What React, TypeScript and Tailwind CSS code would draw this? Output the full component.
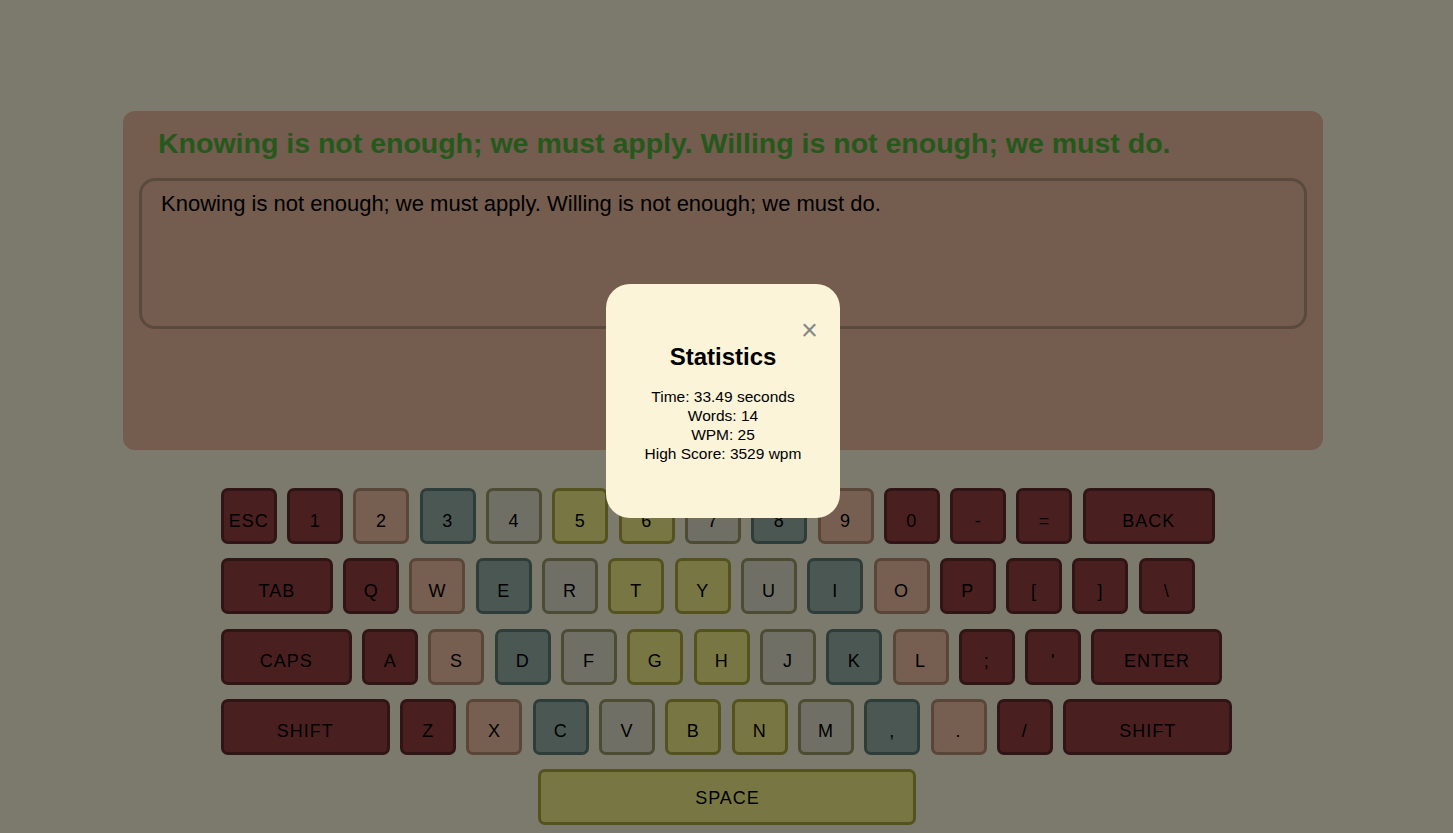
import React from "react";

type Tone = "red" | "brown" | "slate" | "gray" | "olive";

const toneClass: Record<Tone, string> = {
  red: "bg-[#943e40] border-[#5e2a2c]",
  brown: "bg-[#ecbca0] border-[#b48c70]",
  slate: "bg-[#96aea6] border-[#5e7a74]",
  gray: "bg-[#dedecc] border-[#969866]",
  olive: "bg-[#f0ee86] border-[#a8a43e]",
};

type KeyDef = { label: string; tone: Tone; w?: string; pad?: string };

const rows: KeyDef[][] = [
  [
    { label: "ESC", tone: "red" },
    { label: "1", tone: "red" },
    { label: "2", tone: "brown" },
    { label: "3", tone: "slate" },
    { label: "4", tone: "gray" },
    { label: "5", tone: "olive" },
    { label: "6", tone: "olive" },
    { label: "7", tone: "gray" },
    { label: "8", tone: "slate" },
    { label: "9", tone: "brown" },
    { label: "0", tone: "red" },
    { label: "-", tone: "red" },
    { label: "=", tone: "red" },
    { label: "BACK", tone: "red", w: "w-[132px]" },
  ],
  [
    { label: "TAB", tone: "red", w: "w-[112px]" },
    { label: "Q", tone: "red" },
    { label: "W", tone: "brown" },
    { label: "E", tone: "slate" },
    { label: "R", tone: "gray" },
    { label: "T", tone: "olive" },
    { label: "Y", tone: "olive" },
    { label: "U", tone: "gray" },
    { label: "I", tone: "slate" },
    { label: "O", tone: "brown" },
    { label: "P", tone: "red" },
    { label: "[", tone: "red" },
    { label: "]", tone: "red" },
    { label: "\\", tone: "red" },
  ],
  [
    { label: "CAPS", tone: "red", w: "w-[131px]" },
    { label: "A", tone: "red" },
    { label: "S", tone: "brown" },
    { label: "D", tone: "slate" },
    { label: "F", tone: "gray" },
    { label: "G", tone: "olive" },
    { label: "H", tone: "olive" },
    { label: "J", tone: "gray" },
    { label: "K", tone: "slate" },
    { label: "L", tone: "brown" },
    { label: ";", tone: "red" },
    { label: "'", tone: "red" },
    { label: "ENTER", tone: "red", w: "w-[131px]" },
  ],
  [
    { label: "SHIFT", tone: "red", w: "w-[169px]" },
    { label: "Z", tone: "red" },
    { label: "X", tone: "brown" },
    { label: "C", tone: "slate" },
    { label: "V", tone: "gray" },
    { label: "B", tone: "olive" },
    { label: "N", tone: "olive" },
    { label: "M", tone: "gray" },
    { label: ",", tone: "slate" },
    { label: ".", tone: "brown" },
    { label: "/", tone: "red" },
    { label: "SHIFT", tone: "red", w: "w-[169px]" },
  ],
];

function Key({ k }: { k: KeyDef }) {
  return (
    <div
      className={`${k.w ?? "w-[56px]"} ${k.pad ?? "pt-[10px]"} h-[56px] shrink-0 rounded-[7px] border-[3px] flex items-center justify-center text-[18px] tracking-[1px] text-black ${toneClass[k.tone]}`}
    >
      {k.label}
    </div>
  );
}

const quote = "Knowing is not enough; we must apply. Willing is not enough; we must do.";

export default function App() {
  return (
    <div className="min-h-screen bg-[#f6f4d8] font-['Liberation_Sans',Arial,sans-serif] text-black pt-[111px]">
      <div className="flex justify-center pr-[7px]">
        <div className="w-[1200px] rounded-[12px] bg-[#e8b89e] px-4 pt-[14px] pb-[121px]">
          <h1 className="px-[19px] text-[28.5px] font-bold leading-[36px] text-[#4ab239]">{quote}</h1>
          <div className="mt-[17px] h-[151px] rounded-[16px] border-[3px] border-[#b4947a] px-[19px] py-[9px] text-[22px] leading-[28px]">
            {quote}
          </div>
        </div>
      </div>

      <div className="mx-auto mt-[38px] w-fit">
        <div className="flex flex-col gap-[14.25px]">
          {rows.map((row, i) => (
            <div key={i} className="flex gap-[10.3px]">
              {row.map((k, j) => (
                <Key key={j} k={k} />
              ))}
            </div>
          ))}
          <div className="flex justify-center pl-[2px]">
            <Key k={{ label: "SPACE", tone: "olive", w: "w-[378px]", pad: "pt-[2px]" }} />
          </div>
        </div>
      </div>

      <div className="fixed inset-0 bg-black/50">
        <div className="flex justify-center pt-[284px] pr-[7px]">
          <div className="w-[234px] h-[234px] rounded-[24px] bg-[#fbf4d9] px-5 pt-[32px] text-center">
            <div className="flex justify-end pr-[2px]">
              <span className="text-[29px] leading-[28px] text-[#888888]">&times;</span>
            </div>
            <h2 className="mt-[-2px] text-[24px] font-bold leading-[30px]">Statistics</h2>
            <div className="mt-[15px] text-[15.5px] leading-[19px]">
              <p>Time: 33.49 seconds</p>
              <p>Words: 14</p>
              <p>WPM: 25</p>
              <p>High Score: 3529 wpm</p>
            </div>
          </div>
        </div>
      </div>
    </div>
  );
}
